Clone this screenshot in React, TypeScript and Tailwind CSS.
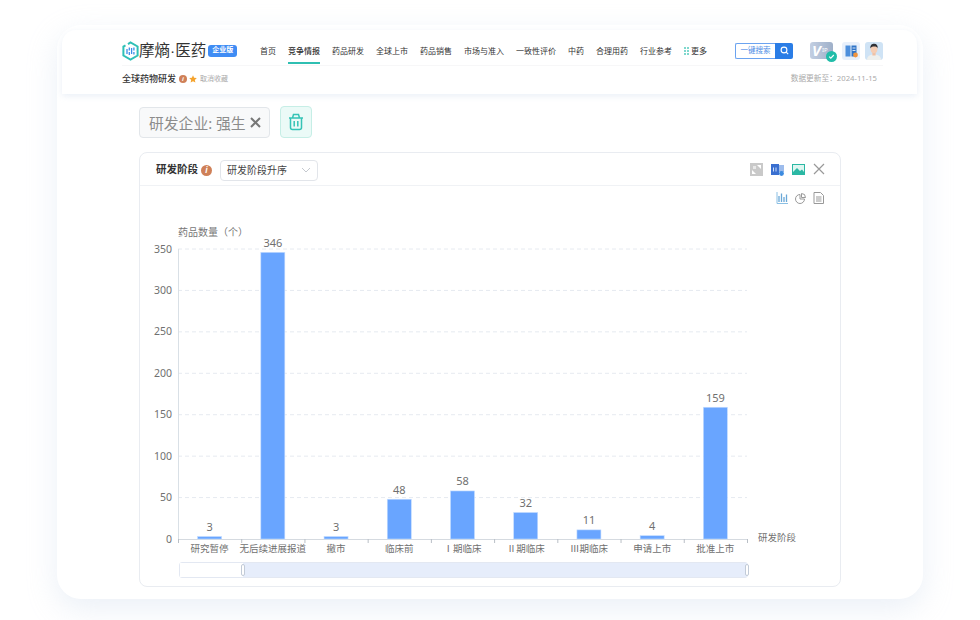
const navItems = ["首页", "竞争情报", "药品研发", "全球上市", "药品销售", "市场与准入", "一致性评价", "中药", "合理用药", "行业参考"];

const bars = [
  { name: "研究暂停", value: 3 },
  { name: "无后续进展报道", value: 346 },
  { name: "撤市", value: 3 },
  { name: "临床前", value: 48 },
  { name: "Ⅰ期临床", value: 58 },
  { name: "Ⅱ期临床", value: 32 },
  { name: "Ⅲ期临床", value: 11 },
  { name: "申请上市", value: 4 },
  { name: "批准上市", value: 159 },
];

const InfoDot = ({ className }: { className: string }) => (
  <span className={`flex shrink-0 items-center justify-center rounded-full bg-[#cf8058] font-bold italic leading-none text-white ${className}`}>i</span>
);

const Logo = () => (
  <svg width="17" height="20" viewBox="0 0 17 20" fill="none" className="shrink-0">
    <path d="M6 3.200 8.500 1.500 15.600 5.500V14.500L8.500 18.500 1.400 14.500V5.500L3.500 4.400" stroke="#2fc0b6" strokeWidth="2" />
    <path d="M5 8v5M7.300 6.500v3M7.300 11v3M9.600 7v6M11.900 6.500v3M11.900 11v2.500" stroke="#3b8ee8" strokeWidth="1.300" />
  </svg>
);

const Chart = () => {
  const baseY = 329;
  const left = 38;
  const step = 63.22;
  const scale = 290 / 350;
  return (
    <svg width="700" height="351" viewBox="0 0 700 351" className="block font-['Noto_Sans','Noto_Sans_CJK_SC',sans-serif]">
      <text x="38" y="26" fontSize="10" fill="#777">药品数量（个）</text>
      {[0, 50, 100, 150, 200, 250, 300, 350].map((t) => {
        const y = baseY - t * scale;
        return (
          <g key={t}>
            {t > 0 && <line x1={left} x2="607" y1={y} y2={y} stroke="#e6eaf0" strokeDasharray="4 3" />}
            <text x="32" y={y + 3.500} fontSize="10.500" textAnchor="end" fill="#707070">{t}</text>
          </g>
        );
      })}
      <line x1={left + 0.5} x2={left + 0.5} y1="39" y2={baseY} stroke="#d9e0e6" />
      <line x1={left} x2="607" y1={baseY + 0.5} y2={baseY + 0.5} stroke="#d5dae0" />
      {bars.map((b, i) => {
        const cx = left + step * (i + 0.5);
        const h = b.value * scale;
        return (
          <g key={b.name}>
            <line x1={left + step * i + 0.5} x2={left + step * i + 0.5} y1={baseY} y2={baseY + 4} stroke="#b9bfc6" />
            <rect x={cx - 12} y={baseY - h} width="24" height={h} fill="#69a5ff" stroke="#c4dcff" strokeWidth="0.600" />
            <text x={cx} y={baseY - h - 5.500} fontSize="11" textAnchor="middle" fill="#707070">{b.value}</text>
            <text x={cx} y={baseY + 13} fontSize="9.500" textAnchor="middle" fill="#707070">{b.name}</text>
          </g>
        );
      })}
      <line x1="607.5" x2="607.5" y1={baseY} y2={baseY + 4} stroke="#b9bfc6" />
      <text x="618" y={baseY + 2} fontSize="9.500" fill="#707070">研发阶段</text>
    </svg>
  );
};

export default function App() {
  return (
    <div className="h-[620px] w-[980px] overflow-hidden bg-white pl-[57px] pt-[25px] font-['Noto_Sans','Noto_Sans_CJK_SC',sans-serif]">
      <div className="flex h-[574px] w-[866px] flex-col rounded-[24px] bg-white px-[5px] pt-[5px] shadow-[0_10px_30px_rgba(190,205,230,0.3)]">
        <div className="h-[64px] w-[855px] shrink-0 rounded-t-[14px] pl-[60px] pr-[34px] shadow-[0_2px_6px_rgba(200,215,235,0.4)]">
          <div className="flex h-[36px] items-center border-b border-[#f7f7f8]">
            <div className="flex w-[138px] shrink-0 items-center pt-[6px]">
              <Logo />
              <span className="text-[15.500px] leading-none text-[#333]">
                摩熵<span className="font-['Liberation_Sans']">·</span>医药
              </span>
              <span className="ml-[2px] flex h-[12px] w-[29px] items-center justify-center rounded-[3px] bg-[#3f8cf4] text-[7px] font-bold text-white">企业版</span>
            </div>
            <nav className="flex h-full w-[475px] shrink-0 items-center gap-[12px] pt-[7px]">
              {navItems.map((item) => (
                <span key={item} className={`relative text-[8px] text-[#333] ${item === "竞争情报" ? "font-medium" : ""}`}>
                  {item}
                  {item === "竞争情报" && <span className="absolute left-0 top-[17px] h-[1.500px] w-full bg-[#2fbfb2]" />}
                </span>
              ))}
              <span className="flex items-center text-[8px] text-[#333]">
                <span className="mr-[2px] grid grid-cols-2 gap-[1px]">
                  {[0, 1, 2, 3, 4, 5].map((d) => <span key={d} className="h-[2px] w-[2px] bg-[#7fd8cd]" />)}
                </span>
                更多
              </span>
            </nav>
            <div className="flex h-[16px] shrink-0 translate-y-[3px]">
              <span className="flex w-[40px] items-center justify-center rounded-l-[2px] border border-r-0 border-[#6ba3f0] bg-white text-[7.500px] text-[#4c8ce6]">一键搜索</span>
              <span className="flex w-[18px] items-center justify-center rounded-r-[2px] bg-[#2a7de6]">
                <svg width="9" height="9" viewBox="0 0 9 9" fill="none"><circle cx="4" cy="4" r="2.900" stroke="#fff" strokeWidth="1.100" /><path d="m6.200 6.200 2 2" stroke="#fff" strokeWidth="1.100" /></svg>
              </span>
            </div>
            <div className="relative ml-[17px] h-[17px] w-[23px] shrink-0 translate-y-[3px] rounded-[3px] bg-gradient-to-r from-[#c3cfe2] to-[#9fb0c9]">
              <span className="absolute left-[2px] top-[0px] text-[15px] font-bold italic leading-[17px] text-white">V</span>
              <span className="absolute left-[12px] top-[4px] text-[6px] leading-[8px] text-white">IP</span>
              <span className="absolute -bottom-[3px] -right-[4px] flex h-[11px] w-[11px] items-center justify-center rounded-full bg-[#21bda9]">
                <svg width="7" height="7" viewBox="0 0 7 7" fill="none"><path d="m1.200 3.600 1.600 1.600 3-3.200" stroke="#fff" strokeWidth="1.100" /></svg>
              </span>
            </div>
            <div className="ml-[9px] flex h-[18px] w-[18px] shrink-0 translate-y-[3px] items-center justify-center rounded-[3px] bg-[#e8f0fb]">
              <svg width="14" height="14" viewBox="0 0 14 14">
                <rect x="1.500" y="1.500" width="5" height="11" fill="#4d8fdc" />
                <rect x="7.500" y="1.500" width="5" height="11" fill="#2f74c8" />
                <path d="M8.500 4h3M8.500 6.500h3" stroke="#fff" strokeWidth="0.800" />
                <circle cx="11.500" cy="11" r="2.400" fill="#ef9440" />
              </svg>
            </div>
            <div className="ml-[5px] h-[18px] w-[18px] shrink-0 translate-y-[3px] overflow-hidden rounded-[3px] bg-[#cfe3f5]">
              <svg width="18" height="18" viewBox="0 0 18 18">
                <path d="M2 18c0-4 3-5.500 7-5.500s7 1.500 7 5.500z" fill="#eef0ee" />
                <rect x="7.400" y="9.500" width="3.200" height="4" fill="#efc0a4" />
                <ellipse cx="9" cy="7.300" rx="3.400" ry="4" fill="#f5cdb4" />
                <path d="M5.400 6.500C5 3 7 1.800 9.300 1.800s3.700 1.500 3.300 4.700c-.5-1.400-1.300-2-3.400-2-1.800 0-3.200.6-3.800 2z" fill="#2f3136" />
              </svg>
            </div>
          </div>
          <div className="mt-[6px] flex h-[14px] items-center">
            <span className="text-[9px] font-medium text-[#333]">全球药物研发</span>
            <InfoDot className="ml-[3px] h-[8px] w-[8px] text-[6px]" />
            <svg width="8" height="8" viewBox="0 0 8 8" className="ml-[2px]"><path d="m4 .3 1.100 2.500 2.700.3-2 1.800.6 2.700L4 6.200 1.600 7.600l.6-2.700-2-1.800 2.700-.3z" fill="#f5a32d" /></svg>
            <span className="ml-[3px] text-[7px] text-[#aaa]">取消收藏</span>
            <span className="ml-auto mr-[6px] text-[7.700px] text-[#aaa]">数据更新至：2024-11-15</span>
          </div>
        </div>

        <div className="ml-[77px] mt-[12px] flex shrink-0 items-center gap-[10px]">
          <div className="flex h-[31px] w-[131px] items-center rounded-[4px] border border-[#e2e6ea] bg-[#f8f9fa] pl-[9px] text-[14.800px] text-[#8c8c8c]">
            <span className="translate-y-[1px]">研发企业: 强生</span>
            <svg width="11" height="11" viewBox="0 0 11 11" className="ml-[4px]" fill="none"><path d="m1 1 9 9M10 1l-9 9" stroke="#777" strokeWidth="2" /></svg>
          </div>
          <div className="flex h-[32px] w-[32px] items-center justify-center rounded-[4px] border border-[#c6eee6] bg-[#ebfaf7]">
            <svg width="16" height="18" viewBox="0 0 16 18" fill="none" stroke="#35c4b6" strokeWidth="1.500">
              <path d="M1 5h14M4.500 5l1-3.500h5l1 3.500M2.500 5v9.500a2 2 0 0 0 2 2h7a2 2 0 0 0 2-2V5" />
              <path d="M6.200 8v5.500M9.800 8v5.500" />
            </svg>
          </div>
        </div>

        <div className="ml-[77px] mt-[14px] h-[435px] w-[702px] shrink-0 rounded-[8px] border border-[#e9ecf1]">
          <div className="flex h-[33px] items-center border-b border-[#f0f2f5] pl-[16px] pr-[15px]">
            <div className="flex translate-y-[1px] items-center">
              <span className="text-[10.500px] font-bold text-[#333]">研发阶段</span>
              <InfoDot className="ml-[3px] h-[11px] w-[11px] text-[8px]" />
              <div className="ml-[8px] flex h-[21px] w-[98px] items-center justify-between rounded-[4px] border border-[#e2e5ea] px-[6px] text-[10px] text-[#444]">
                研发阶段升序
                <svg width="10" height="6" viewBox="0 0 10 6" fill="none"><path d="m1 1 4 4 4-4" stroke="#c5c9cf" /></svg>
              </div>
            </div>
            <div className="ml-auto flex items-center gap-[8px]">
              <svg width="13" height="13" viewBox="0 0 13 13"><rect width="13" height="13" fill="#c9c9c9" /><path d="M7 2h4v4zM2 7v4h4z" fill="#fff" /><rect x="3" y="3" width="3" height="3" fill="#e8e8e8" /></svg>
              <svg width="13" height="13" viewBox="0 0 13 13"><rect x="0" y="1" width="8" height="11" fill="#3a6fd0" /><rect x="8" y="2" width="5" height="7" fill="#9dbcec" /><circle cx="10.500" cy="10.500" r="2.400" fill="#3c8be0" /><path d="M2.500 4.500v4M5 4.500v4" stroke="#cfe0fa" strokeWidth="1" /></svg>
              <svg width="13" height="11" viewBox="0 0 13 11"><rect width="13" height="11" fill="#2bb8a4" /><rect x="1" y="1" width="11" height="7" fill="#dff6f1" /><path d="m1 8 4-4 3 3 2-1.500 2 2.500z" fill="#2bb8a4" /></svg>
              <svg width="12" height="12" viewBox="0 0 12 12" fill="none"><path d="m1 1 10 10M11 1 1 11" stroke="#999" strokeWidth="1.200" /></svg>
            </div>
          </div>
          <div className="flex h-[24px] items-center justify-end gap-[7px] pr-[16px]">
            <svg width="12" height="12" viewBox="0 0 12 12" fill="none"><path d="M1 0v11.500h11" stroke="#8cc0e4" /><path d="M3 10V4M5.500 10V1.500M8 10V5M10.500 10V2.500" stroke="#6aa8d8" strokeWidth="1.300" /></svg>
            <svg width="11" height="11" viewBox="0 0 11 11" fill="none" stroke="#999"><path d="M5 1.500a4.500 4.500 0 1 0 4.500 4.500H5z" /><path d="M6.500.500a4 4 0 0 1 4 4h-4z" /></svg>
            <svg width="11" height="12" viewBox="0 0 11 12" fill="none" stroke="#999"><path d="M1 .500h6.500L10.500 3.500v8H1z" /><path d="M3 5h5.500M3 7h5.500M3 9h5.500" /></svg>
          </div>
          <Chart />
          <div className="ml-[39px] mt-[1px] flex h-[16px] w-[569px] rounded-[3px] border border-[#e3e8f2]">
            <div className="w-[63px] shrink-0 bg-white" />
            <div className="relative flex-1 bg-[#e6edfb]">
              <span className="absolute -left-[2px] top-[1px] h-[12px] w-[4px] rounded-[2px] border border-[#c2cbd8] bg-white" />
              <span className="absolute -right-[2px] top-[1px] h-[12px] w-[4px] rounded-[2px] border border-[#c2cbd8] bg-white" />
            </div>
          </div>
        </div>
      </div>
    </div>
  );
}
